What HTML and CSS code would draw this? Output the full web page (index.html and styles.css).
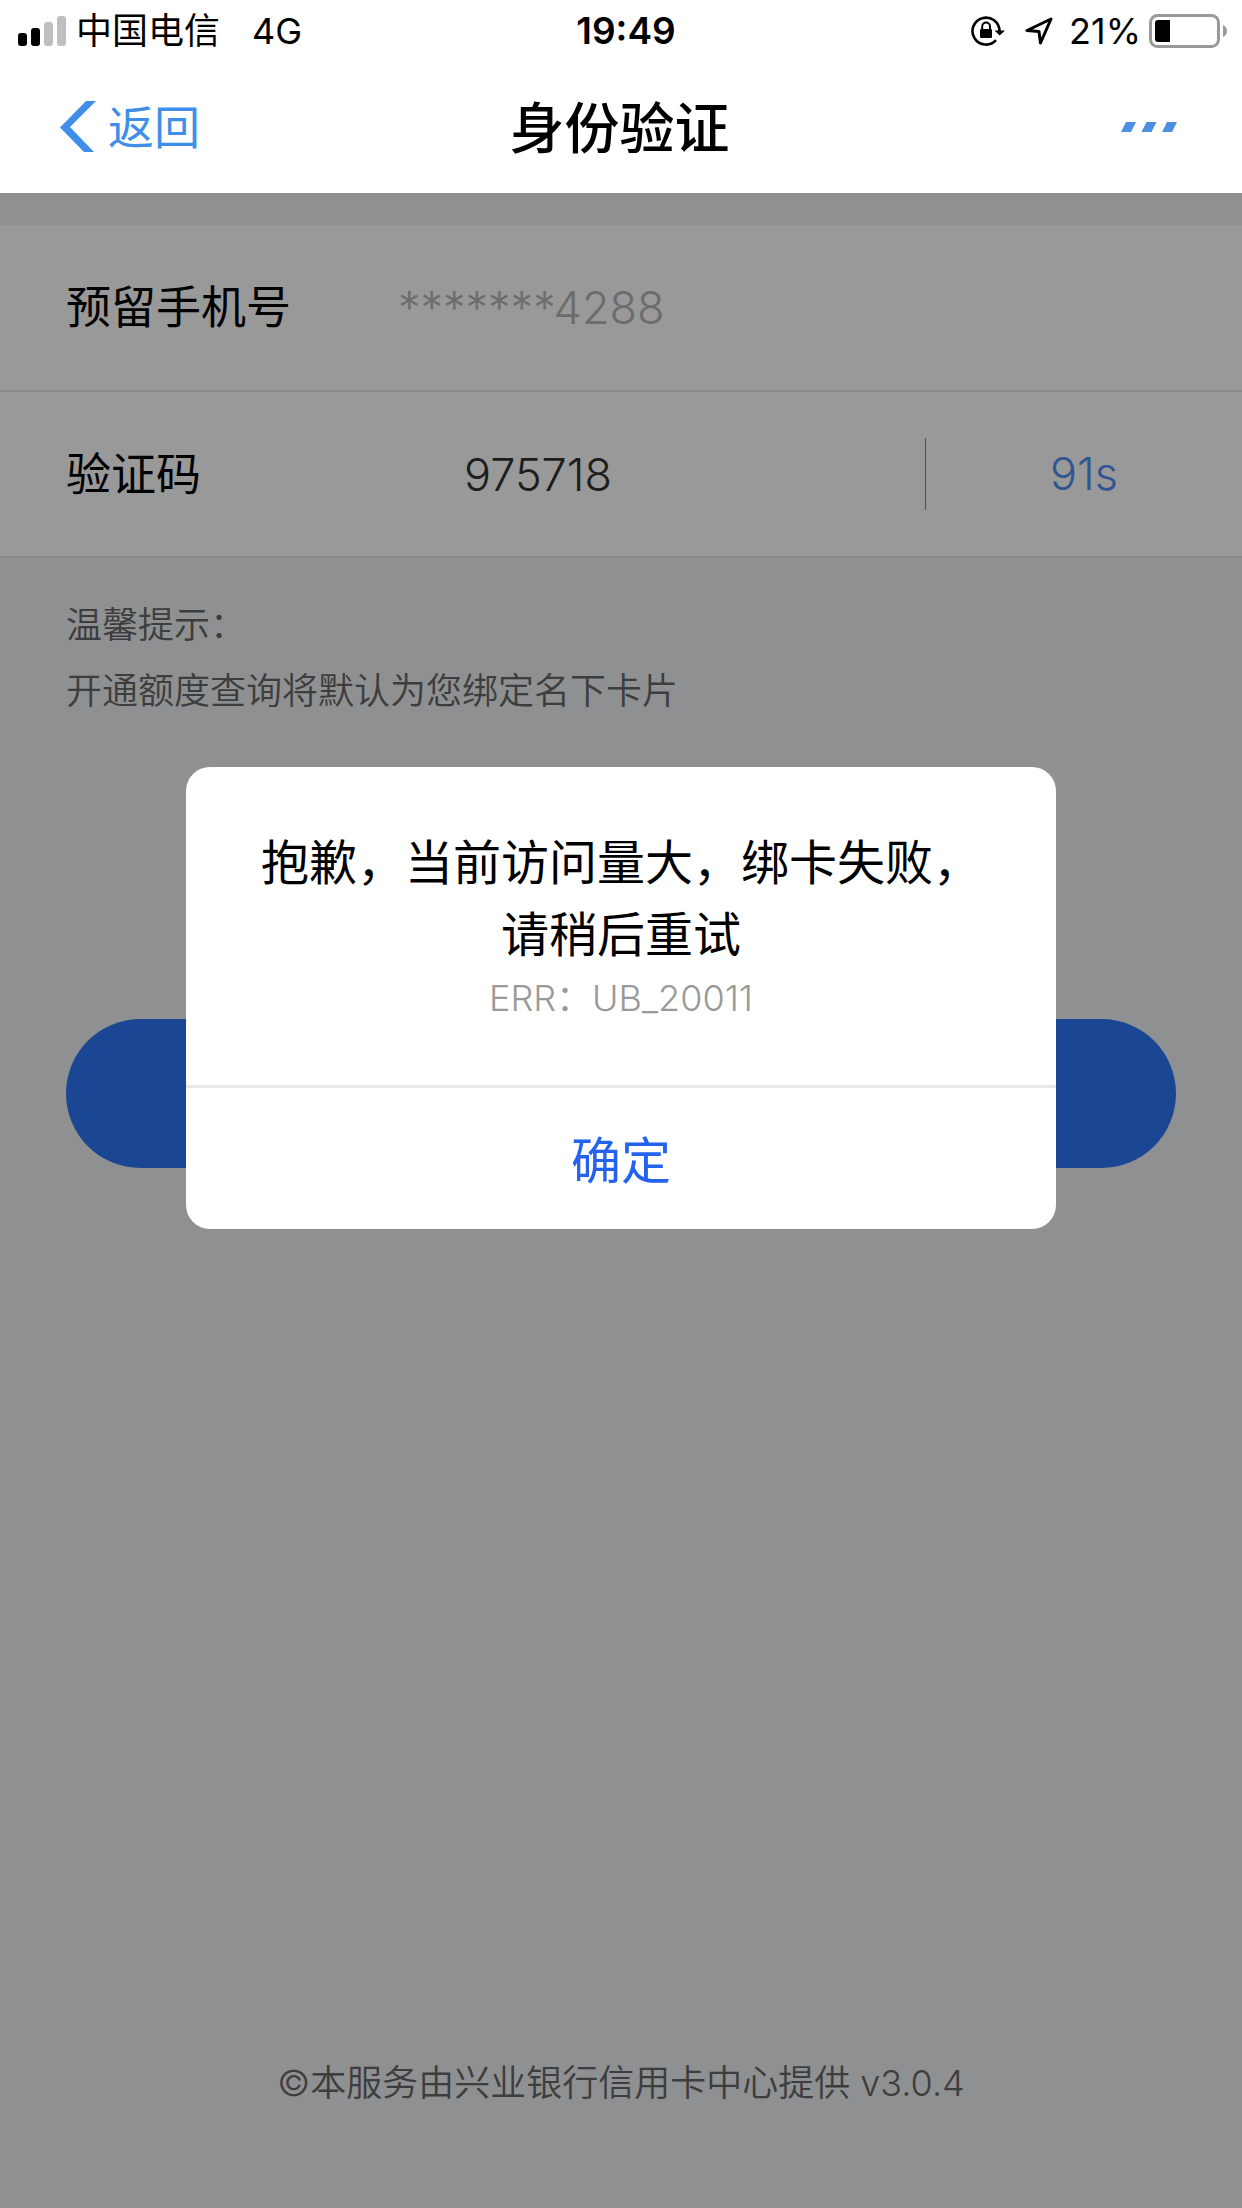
FILE: index.html
```html
<!DOCTYPE html>
<html lang="zh-CN">
<head>
<meta charset="utf-8">
<meta name="viewport" content="width=device-width, initial-scale=1">
<title>身份验证</title>
<link rel="stylesheet" href="styles.css">
</head>
<body>
<div class="status-bar">
  <div class="status-left">
    <svg class="signal" width="48" height="30" viewBox="0 0 48 30" aria-hidden="true">
      <rect x="0" y="17" width="9" height="13" rx="3"/>
      <rect x="13" y="12" width="9" height="18" rx="3"/>
      <rect x="26" y="6" width="9" height="24" rx="3" fill="#bfbfbf"/>
      <rect x="39" y="0" width="9" height="30" rx="3" fill="#bfbfbf"/>
    </svg>
    <span>中国电信</span>
    <span class="network">4G</span>
  </div>
  <time class="clock">19:49</time>
  <div class="status-right">
    <svg width="34" height="32" viewBox="0 0 34 32" aria-hidden="true">
      <path d="M28.5 16A13.5 13.5 0 1 0 25 25.2" fill="none" stroke="#000" stroke-width="2.6"/>
      <path d="M23.5 15.5H34L28.700 20.500Z"/>
      <rect x="9" y="14" width="12" height="9" rx="1.200"/>
      <path d="M11.200 14.500V11.500a3.900 3.900 0 0 1 7.800 0v3" fill="none" stroke="#000" stroke-width="2"/>
    </svg>
    <svg class="location" width="28" height="28" viewBox="0 0 28 28" aria-hidden="true">
      <path d="M26 2 2 13.500 14 14.500 15.500 26Z" fill="none" stroke="#000" stroke-width="3" stroke-linejoin="round"/>
    </svg>
    <span class="percent">21%</span>
    <svg class="battery" width="78" height="34" viewBox="0 0 78 34" aria-hidden="true">
      <rect x="1.500" y="1.500" width="68" height="31" rx="7" fill="none" stroke="#999" stroke-width="3"/>
      <path d="M9 6H21V28H9Q6 28 6 25V9Q6 6 9 6Z"/>
      <path d="M74 11Q78 13 78 17T74 23Z" fill="#999"/>
    </svg>
  </div>
</div>
<header class="nav-bar">
  <button class="back" type="button">
    <svg width="36" height="51" viewBox="0 0 36 51" aria-hidden="true"><path d="M26 0H36L10 26 34 51H24L0 26.500Z" fill="#3f8fea"/></svg>
    <span class="back-text">返回</span>
  </button>
  <h1 class="title">身份验证</h1>
  <button class="more" type="button" aria-label="更多">
    <svg width="56" height="10" viewBox="0 0 56 10" aria-hidden="true" fill="#4f8fe2"><path d="M5 0H15L10 10H0ZM25.500 0H35.500L30.500 10H20.500ZM46 0H56L51 10H41Z"/></svg>
  </button>
</header>
<main class="page">
  <form class="form">
    <div class="row">
      <label class="label" for="phone">预留手机号</label>
      <input class="field phone" id="phone" type="text" placeholder="*******4288" readonly>
    </div>
    <div class="row">
      <label class="label" for="code">验证码</label>
      <input class="field code" id="code" type="text" inputmode="numeric" value="975718">
      <span class="countdown">91s</span>
    </div>
    <div class="tips">
      <p>温馨提示：</p>
      <p>开通额度查询将默认为您绑定名下卡片</p>
    </div>
    <button class="submit" type="button" aria-label="下一步"></button>
  </form>
  <footer class="footer">©本服务由兴业银行信用卡中心提供 v3.0.4</footer>
  <div class="overlay">
    <div class="dialog" role="alertdialog" aria-labelledby="message">
      <div class="dialog-body">
        <p class="message" id="message">抱歉，当前访问量大，绑卡失败，请稍后重试</p>
        <p class="error">ERR：UB_20011</p>
      </div>
      <button class="confirm" type="button">确定</button>
    </div>
  </div>
</main>
</body>
</html>
```
FILE: styles.css
```css
* {
  box-sizing: border-box;
}

body {
  display: flex;
  flex-direction: column;
  min-height: 100vh;
  margin: 0;
  background: #fff;
  color: #000;
  font-family: Inter, "Noto Sans CJK SC", sans-serif;
  font-size: 36px;
}

h1,
p {
  margin: 0;
}

button,
input {
  padding: 0;
  border: 0;
  background: none;
  font: inherit;
}

svg {
  display: block;
  flex: none;
}

.status-bar {
  display: grid;
  grid-template-columns: 1fr auto 1fr;
  align-items: center;
  height: 60px;
  padding: 0 15px 0 18px;
  line-height: 62px;
}

.status-left,
.status-right {
  display: flex;
  align-items: center;
}

.status-right {
  justify-content: flex-end;
}

.signal {
  margin-right: 10px;
}

.network {
  margin-left: 32px;
}

.clock {
  padding-left: 7px;
  font-size: 37px;
  font-weight: 600;
}

.location {
  margin-left: 20px;
}

.percent {
  margin: 0 8px 0 16px;
}

.nav-bar {
  display: grid;
  grid-template-columns: 1fr auto 1fr;
  align-items: center;
  height: 133px;
  padding: 0 65px 0 62px;
}

.back {
  display: flex;
  align-items: center;
  justify-self: start;
  gap: 12px;
  margin-left: -2px;
  color: #3f8fea;
  font-size: 46px;
}

.back-text,
.title,
.label {
  padding-bottom: 6px;
}

.title {
  font-size: 55px;
  font-weight: 500;
}

.more {
  justify-self: end;
  padding: 20px 0;
}

.page {
  position: relative;
  display: flex;
  flex: 1;
  flex-direction: column;
  padding-top: 32px;
  background: #eff0f3;
}

.row {
  display: flex;
  align-items: center;
  height: 165px;
  padding-left: 66px;
  background: #fff;
  font-size: 45px;
}

.row + .row {
  height: 168px;
  border-top: 2px solid #e6e6e8;
  border-bottom: 2px solid #e6e6e8;
}

.label {
  width: 332px;
}

.field {
  width: 280px;
  font-weight: 350;
}

.phone::placeholder {
  color: #b4b4b4;
  opacity: 1;
}

.code {
  color: #333;
  text-align: center;
}

.countdown {
  width: 317px;
  margin-left: auto;
  border-left: 1px solid #888;
  color: #5090f4;
  font-weight: 350;
  line-height: 72px;
  text-align: center;
}

.tips {
  padding: 34px 66px 33px;
  color: #666;
  font-weight: 350;
  line-height: 66px;
}

.submit {
  display: block;
  width: calc(100% - 132px);
  height: 149px;
  margin: 262px auto 0;
  border-radius: 75px;
  background: #2d76f5;
}

.footer {
  margin-top: auto;
  padding: 0 66px 95px;
  color: #666;
  font-weight: 350;
  line-height: 60px;
  text-align: center;
}

.overlay {
  position: absolute;
  inset: 0;
  padding-top: 574px;
  background: rgba(0, 0, 0, 0.4);
}

.dialog {
  width: 70%;
  margin: 0 auto;
  border-radius: 24px;
  background: #fff;
  text-align: center;
}

.dialog-body {
  padding: 60px 72px 60px;
}

.message {
  font-size: 48px;
  line-height: 72px;
}

.error {
  color: #999;
  font-weight: 350;
  line-height: 54px;
}

.confirm {
  display: block;
  width: 100%;
  padding-top: 6px;
  border-top: 3px solid #e8e8e8;
  color: #2363ee;
  font-size: 50px;
  line-height: 135px;
}
```
